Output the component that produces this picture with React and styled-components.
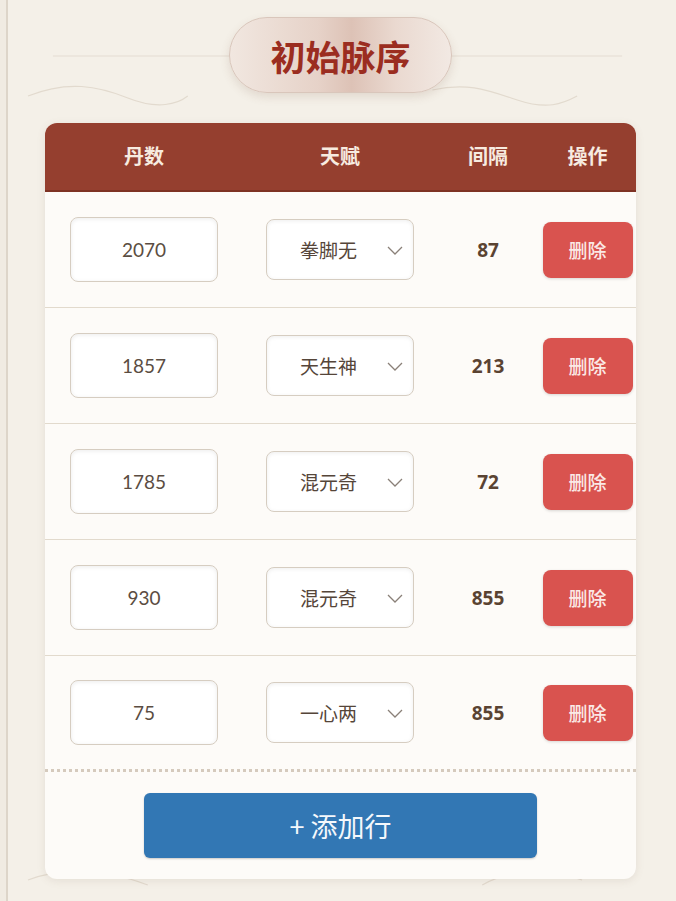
import React, { useState } from "react";
import styled, { createGlobalStyle } from "styled-components";

const GlobalStyle = createGlobalStyle`
  html, body {
    margin: 0;
    padding: 0;
    background: #f3efe7;
  }
  * { box-sizing: border-box; }
`;

const Page = styled.div`
  min-height: 901px;
  padding-left: 6px;
  background: #f0ebe2;
  font-family: "Noto Sans CJK SC", "Noto Sans", sans-serif;
`;

const Frame = styled.div`
  position: relative;
  min-height: 901px;
  border-left: 2px solid #ddd5c9;
  background: #f4f0e8;
  padding: 17px 40px 21px 37px;
`;

const Decor = styled.svg`
  position: absolute;
  left: 0;
  top: 0;
  width: 100%;
  height: 901px;
  pointer-events: none;
`;

const TitleRow = styled.div`
  position: relative;
  display: flex;
  justify-content: center;
  margin-bottom: 30px;
`;

const TitlePill = styled.h1`
  margin: 0;
  width: 223px;
  height: 76px;
  border-radius: 38px;
  display: flex;
  align-items: center;
  justify-content: center;
  font-size: 35px;
  font-weight: 700;
  color: #9b2d20;
  background: linear-gradient(90deg, #f1e7e0 0%, #e6d2c8 40%, #ddc2b6 55%, #ead9d0 75%, #f2e9e3 100%);
  border: 1px solid #d9c6bb;
  box-shadow: 0 4px 10px rgba(120, 80, 60, 0.15);
`;

const Card = styled.div`
  position: relative;
  background: #fdfbf8;
  border-radius: 12px;
  box-shadow: 0 2px 8px rgba(120, 100, 80, 0.12);
  overflow: hidden;
`;

const Grid = styled.div`
  display: grid;
  grid-template-columns: 198px 194px 102px 1fr;
  align-items: center;
`;

const Header = styled(Grid)`
  height: 69px;
  background: #953f2f;
  border-bottom: 2px solid #7e3224;
`;

const HeadCell = styled.div`
  text-align: center;
  color: #f7ebe0;
  font-size: 20px;
  font-weight: 700;
  padding-bottom: 2px;
`;

const Row = styled(Grid)`
  height: 116px;
  border-bottom: ${(p) => (p.$last ? "3px dotted #d5cabd" : "1.5px solid #e2dacd")};
`;

const Cell = styled.div`
  display: flex;
  justify-content: center;
  align-items: center;
`;

const NumInput = styled.input`
  width: 148px;
  height: 65px;
  border: 1.5px solid #d6cdc1;
  border-radius: 8px;
  background: #fff;
  box-shadow: inset 0 1px 4px rgba(0, 0, 0, 0.08);
  text-align: center;
  font-family: Lato, "Noto Sans", sans-serif;
  font-size: 19px;
  color: #5b4d42;
  outline: none;
`;

const SelectBox = styled.div`
  position: relative;
  width: 148px;
  height: 61px;
  border: 1.5px solid #d6cdc1;
  border-radius: 8px;
  background: #fff;
  box-shadow: inset 0 1px 4px rgba(0, 0, 0, 0.07);
  display: flex;
  align-items: center;
  padding-left: 33px;
  font-size: 19px;
  color: #554539;
`;

const Chevron = styled.svg`
  position: absolute;
  right: 9px;
  top: 50%;
  margin-top: -6px;
  width: 18px;
  height: 12px;
`;

const Interval = styled.div`
  text-align: center;
  font-family: "Open Sans", "Noto Sans", sans-serif;
  font-weight: 700;
  font-size: 19px;
  color: #5a4332;
`;

const DeleteButton = styled.button`
  width: 90px;
  height: 56px;
  border: none;
  border-radius: 8px;
  background: #d9534f;
  color: #fbe9e6;
  font-family: inherit;
  font-size: 19px;
  font-weight: 500;
  box-shadow: 0 1px 3px rgba(0, 0, 0, 0.15);
  cursor: pointer;
`;

const Footer = styled.div`
  display: flex;
  justify-content: center;
  padding: 21px 0 21px;
`;

const AddButton = styled.button`
  width: 393px;
  height: 65px;
  border: none;
  border-radius: 6px;
  background: #3277b4;
  color: #f4f8fc;
  font-family: inherit;
  font-size: 27px;
  cursor: pointer;
  box-shadow: 0 1px 2px rgba(0, 0, 0, 0.2);
`;

const initialRows = [
  { dan: "2070", talent: "拳脚无", gap: 87 },
  { dan: "1857", talent: "天生神", gap: 213 },
  { dan: "1785", talent: "混元奇", gap: 72 },
  { dan: "930", talent: "混元奇", gap: 855 },
  { dan: "75", talent: "一心两", gap: 855 },
];

const App = () => {
  const [rows, setRows] = useState(initialRows);

  return (
    <Page>
      <GlobalStyle />
      <Frame>
        <Decor viewBox="0 0 669 901" preserveAspectRatio="none">
          <line x1="45" y1="56" x2="615" y2="56" stroke="#e3dbd1" strokeWidth="1.2" />
          <path d="M20 96 C60 80 90 86 120 98 S170 104 180 96" fill="none" stroke="#e2dace" strokeWidth="1.2" />
          <path d="M425 90 C460 82 480 90 510 100 S555 104 570 96" fill="none" stroke="#e2dace" strokeWidth="1.2" />
          <path d="M20 880 C60 865 100 870 140 885" fill="none" stroke="#e2dace" strokeWidth="1.2" />
          <path d="M475 885 C500 870 540 868 575 880" fill="none" stroke="#e2dace" strokeWidth="1.2" />
        </Decor>
        <TitleRow>
          <TitlePill>初始脉序</TitlePill>
        </TitleRow>
        <Card>
          <Header>
            <HeadCell>丹数</HeadCell>
            <HeadCell>天赋</HeadCell>
            <HeadCell>间隔</HeadCell>
            <HeadCell>操作</HeadCell>
          </Header>
          {rows.map((r, i) => (
            <Row key={i} $last={i === rows.length - 1}>
              <Cell>
                <NumInput defaultValue={r.dan} />
              </Cell>
              <Cell>
                <SelectBox>
                  {r.talent}
                  <Chevron viewBox="0 0 18 12">
                    <path d="M2 3 L9 10 L16 3" fill="none" stroke="#8a8078" strokeWidth="1.3" />
                  </Chevron>
                </SelectBox>
              </Cell>
              <Interval>{r.gap}</Interval>
              <Cell>
                <DeleteButton onClick={() => setRows(rows.filter((_, j) => j !== i))}>删除</DeleteButton>
              </Cell>
            </Row>
          ))}
          <Footer>
            <AddButton onClick={() => setRows([...rows, { dan: "", talent: "拳脚无", gap: 0 }])}>
              + 添加行
            </AddButton>
          </Footer>
        </Card>
      </Frame>
    </Page>
  );
};

export default App;
